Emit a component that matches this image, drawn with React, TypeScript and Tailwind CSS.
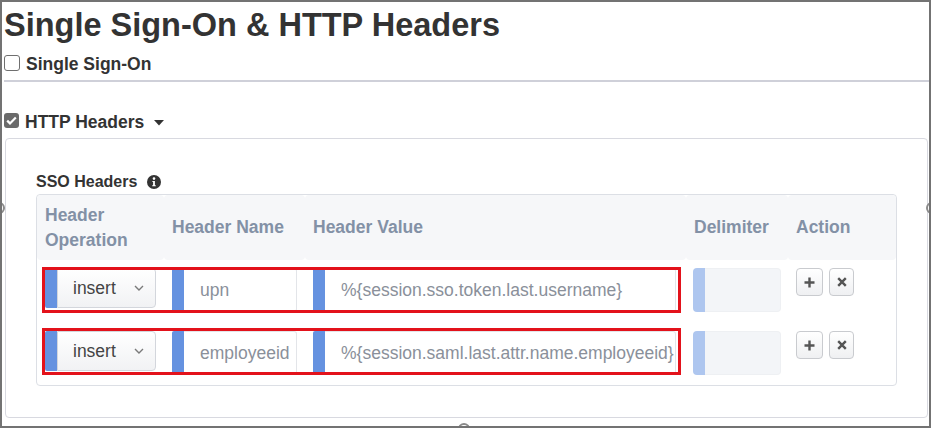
import React from "react"

function Checkbox({ checked }: { checked?: boolean }) {
  if (checked) {
    return (
      <span className="mt-[1px] flex h-[15px] w-[15px] shrink-0 items-center justify-center rounded-[3px] bg-[#6b6b6b]">
        <svg width="11" height="9" viewBox="0 0 11 9">
          <path d="M1.2 4.6 L4 7.4 L9.8 1.4" fill="none" stroke="#fff" strokeWidth="2.2" />
        </svg>
      </span>
    )
  }
  return <span className="mt-[1px] h-[16px] w-[16px] shrink-0 rounded-[3px] border border-[#6f6f6f] bg-white" />
}

function Chevron() {
  return (
    <svg width="10" height="6" viewBox="0 0 10 6">
      <path d="M1 1 L5 5 L9 1" fill="none" stroke="#7a7a7a" strokeWidth="1.4" />
    </svg>
  )
}

function InfoIcon() {
  return (
    <svg width="14" height="14" viewBox="0 0 14 14">
      <circle cx="7" cy="7" r="7" fill="#333" />
      <circle cx="7" cy="3.6" r="1.3" fill="#fff" />
      <path d="M5.4 6 H7.9 V10.2 H8.8 V11.3 H5.2 V10.2 H6.1 V7.1 H5.4 Z" fill="#fff" />
    </svg>
  )
}

function BarInput({ value, width }: { value: string; width: string }) {
  return (
    <div className="flex">
      <div className="h-[44px] w-[12px] rounded-l-[2px] bg-[#6592e0]" />
      <div
        className={`flex h-[44px] items-center rounded-r-[3px] border border-l-0 border-[#e3e5e9] bg-white pl-[16px] text-[17.5px] text-[#8a909a] whitespace-nowrap overflow-hidden ${width}`}
      >
        {value}
      </div>
    </div>
  )
}

function Row({ name, value, redTop, redH, h }: { name: string; value: string; redTop: string; redH: string; h: string }) {
  return (
    <div className={`relative grid grid-cols-[127px_141px_381px_102px_108px] ${h}`}>
      <div className="pl-[8px] pt-[8px]">
        <div className="flex">
          <div className="h-[40px] w-[12px] rounded-l-[2px] bg-[#6592e0]" />
          <div className="flex h-[40px] w-[99px] items-center justify-between rounded-r-[4px] border border-[#d3d6dc] bg-gradient-to-b from-white to-[#f1f2f4] pl-[15px] pr-[11px] text-[17.5px] text-[#444]">
            <span>insert</span>
            <Chevron />
          </div>
        </div>
      </div>
      <div className="pl-[8px] pt-[8px]">
        <BarInput value={name} width="w-[113px]" />
      </div>
      <div className="pl-[8px] pt-[8px]">
        <BarInput value={value} width="w-[351px]" />
      </div>
      <div className="pl-[7px] pt-[8px]">
        <div className="flex">
          <div className="h-[44px] w-[12px] rounded-l-[4px] bg-[#aec6ef]" />
          <div className="h-[44px] w-[76px] rounded-r-[4px] border border-l-0 border-[#eef0f3] bg-[#f3f5f8]" />
        </div>
      </div>
      <div className="flex gap-[6px] pl-[8px] pt-[8px]">
        <button className="flex h-[28px] w-[27px] items-center justify-center rounded-[4px] border border-[#c9cbcf] bg-gradient-to-b from-white to-[#eff0f2]">
          <svg width="11" height="11" viewBox="0 0 11 11">
            <path d="M5.5 0.5 V10.5 M0.5 5.5 H10.5" stroke="#555" strokeWidth="2.4" />
          </svg>
        </button>
        <button className="flex h-[28px] w-[25px] items-center justify-center rounded-[4px] border border-[#c9cbcf] bg-gradient-to-b from-white to-[#eff0f2]">
          <svg width="10" height="10" viewBox="0 0 10 10">
            <path d="M1.2 1.2 L8.8 8.8 M8.8 1.2 L1.2 8.8" stroke="#555" strokeWidth="2.4" />
          </svg>
        </button>
      </div>
      <div className={`absolute left-[5px] w-[639px] border-[3px] border-[#e3121b] ${redTop} ${redH}`} />
    </div>
  )
}

export default function App() {
  return (
    <div className="relative h-[428px] w-[931px] overflow-hidden border-2 border-[#737373] bg-white font-['Liberation_Sans',Arial,sans-serif] text-[#333]">
      <div className="pl-[2px]">
        <h1 className="mt-[5px] text-[32.5px] font-bold leading-[37px]">Single Sign-On &amp; HTTP Headers</h1>

        <div className="mt-[10px] flex items-start gap-[6px] text-[17.5px] font-bold leading-[20px]">
          <Checkbox />
          <span>Single Sign-On</span>
        </div>

        <div className="mt-[6px] h-[2px] bg-[#cfd0d9]" />

        <div className="mt-[30px] flex items-start gap-[6px] text-[17.5px] font-bold leading-[20px]">
          <Checkbox checked />
          <span>HTTP Headers</span>
          <svg className="ml-[4px] mt-[8px]" width="10" height="6" viewBox="0 0 10 6">
            <path d="M0 0 H10 L5 5.5 Z" fill="#333" />
          </svg>
        </div>

        <div className="ml-[1px] mr-[1px] mt-[6px] h-[280px] rounded-[4px] border border-[#d8d9e0] px-[30px] pt-[34px]">
          <div className="flex items-center gap-[10px] text-[16px] font-bold leading-[18px]">
            <span>SSO Headers</span>
            <InfoIcon />
          </div>

          <div className="mt-[3px] overflow-hidden rounded-[4px] border border-[#dcdfe5]">
            <div className="grid h-[65px] grid-cols-[127px_141px_381px_102px_108px] text-[17.5px] font-bold leading-[25px] text-[#8391a6]">
              <div className="flex items-center rounded-[4px] bg-[#f6f7f9] px-[8px]">
                Header
                <br />
                Operation
              </div>
              <div className="flex items-center rounded-[4px] bg-[#f6f7f9] px-[8px]">Header Name</div>
              <div className="flex items-center rounded-[4px] bg-[#f6f7f9] px-[8px]">Header Value</div>
              <div className="flex items-center rounded-[4px] bg-[#f6f7f9] px-[8px]">Delimiter</div>
              <div className="flex items-center rounded-[4px] bg-[#f6f7f9] px-[8px]">Action</div>
            </div>
            <Row name="upn" value="%{session.sso.token.last.username}" redTop="top-[7px]" redH="h-[46px]" h="h-[63px]" />
            <Row
              name="employeeid"
              value="%{session.saml.last.attr.name.employeeid}"
              redTop="top-[5px]"
              redH="h-[47px]"
              h="h-[62px]"
            />
          </div>
        </div>
      </div>

      <div className="absolute left-[-9px] top-[200px] h-[12px] w-[12px] rounded-full border-2 border-[#8a8a8a] bg-white" />
      <div className="absolute right-[-9px] top-[200px] h-[12px] w-[12px] rounded-full border-2 border-[#8a8a8a] bg-white" />
      <div className="absolute bottom-[-9px] left-[456px] h-[12px] w-[12px] rounded-full border-2 border-[#8a8a8a] bg-white" />
    </div>
  )
}
